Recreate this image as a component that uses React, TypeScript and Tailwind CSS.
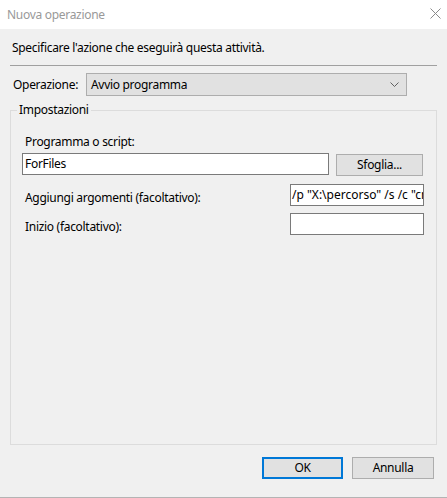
export default function App() {
  return (
    <div className="flex h-[498px] w-[447px] flex-col border-b border-[#b4b4b4] bg-[#f0f0f0] font-['Noto_Sans',sans-serif] text-[12px] leading-[16px] tracking-[-0.3px] text-black">
      <div className="flex h-[29px] items-center justify-between bg-white pl-[7px] pr-[6px]">
        <span className="text-[#999999]">Nuova operazione</span>
        <svg width="11" height="11" viewBox="0 0 11 11" className="mb-[2px]">
          <path d="M0.5 0.5L10.5 10.5M10.5 0.5L0.5 10.5" stroke="#8a8a8a" strokeWidth="1" />
        </svg>
      </div>

      <div className="flex flex-1 flex-col px-[10px]">
        <p className="ml-[2px] mt-[11px]">Specificare l'azione che eseguirà questa attività.</p>
        <div className="mt-[9px] h-px bg-[#a0a0a0]" />

        <div className="mt-[7px] flex items-center">
          <span className="ml-[3px] w-[73px]">Operazione:</span>
          <div className="flex h-[23px] w-[321px] items-center justify-between border border-[#adadad] bg-[#e1e1e1] pl-[4px] pr-[7px]">
            <span>Avvio programma</span>
            <svg width="9" height="5" viewBox="0 0 9 5">
              <path d="M0.5 0.5L4.5 4.5L8.5 0.5" fill="none" stroke="#606060" strokeWidth="1" />
            </svg>
          </div>
        </div>

        <fieldset className="mt-[6px] h-[343px] border border-[#dcdcdc]">
          <legend className="ml-[6px] px-[2px]">Impostazioni</legend>
          <div className="pl-[11px] pr-[12px]">
            <div className="ml-[3px] mt-[16px]">Programma o script:</div>
            <div className="mt-[3px] flex items-start gap-[7px]">
              <div className="flex h-[22px] w-[307px] items-center border border-[#7a7a7a] bg-white pl-[2px]">
                ForFiles
              </div>
              <button
                type="button"
                className="mt-[1px] h-[22px] w-[87px] border border-[#adadad] bg-[#e1e1e1]"
              >
                Sfoglia...
              </button>
            </div>

            <div className="mt-[8px] flex items-start justify-between">
              <span className="ml-[3px] mt-[6px]">Aggiungi argomenti (facoltativo):</span>
              <div className="flex h-[22px] w-[134px] items-center overflow-hidden whitespace-nowrap border border-[#7a7a7a] bg-white pl-[1px] tracking-normal">
                /p "X:\percorso" /s /c "cmd /c del @path"
              </div>
            </div>

            <div className="mt-[7px] flex items-start justify-between">
              <span className="ml-[3px] mt-[6px]">Inizio (facoltativo):</span>
              <div className="h-[22px] w-[134px] border border-[#7a7a7a] bg-white" />
            </div>
          </div>
        </fieldset>

        <div className="mt-[12px] flex justify-end gap-[9px] pr-[3px]">
          <button type="button" className="h-[22px] w-[81px] border-2 border-[#0078d7] bg-[#e1e1e1]">
            OK
          </button>
          <button type="button" className="h-[22px] w-[82px] border border-[#adadad] bg-[#e1e1e1]">
            Annulla
          </button>
        </div>
      </div>
    </div>
  )
}
